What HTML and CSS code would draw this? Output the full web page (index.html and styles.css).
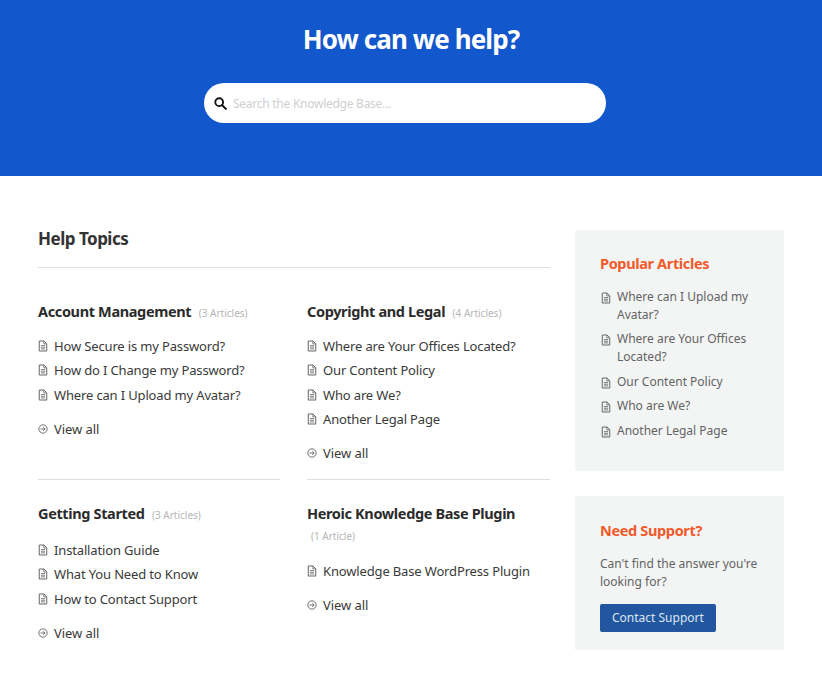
FILE: index.html
```html
<!DOCTYPE html>
<html lang="en">
<head>
  <meta charset="UTF-8">
  <meta name="viewport" content="width=device-width, initial-scale=1.0">
  <title>How can we help?</title>
  <link rel="stylesheet" href="styles.css">
</head>
<body>
  <svg class="sprite" width="0" height="0" aria-hidden="true">
    <symbol id="doc" viewBox="0 0 12 14">
      <path d="M2 1h5.2L10.5 4.3V13H1.5V1z" fill="none" stroke="currentColor" stroke-width="1.2"/>
      <path d="M3.5 6.5h5M3.5 8.5h5M3.5 10.5h5" stroke="currentColor" stroke-width="1"/>
      <path d="M7 1.2v3.3h3.3" fill="none" stroke="currentColor" stroke-width="1"/>
    </symbol>
    <symbol id="arrow" viewBox="0 0 12 12">
      <circle cx="6" cy="6" r="5" fill="none" stroke="currentColor" stroke-width="1"/>
      <path d="M3 6h5.5M6.3 3.8L8.5 6 6.3 8.2" fill="none" stroke="currentColor" stroke-width="1"/>
    </symbol>
  </svg>

  <header class="hero">
    <h1>How can we help?</h1>
    <div class="search">
      <svg class="search-icon" viewBox="0 0 14 14" aria-hidden="true">
        <circle cx="5.6" cy="5.6" r="4.2" fill="none" stroke="currentColor" stroke-width="2"/>
        <path d="M8.8 8.8l4 4" stroke="currentColor" stroke-width="2.2" stroke-linecap="round"/>
      </svg>
      <span class="search-text">Search the Knowledge Base...</span>
    </div>
  </header>

  <div class="page">
    <main class="topics">
      <h2 class="topics-title">Help Topics</h2>
      <div class="topic-grid">
        <section class="topic">
          <h3><span class="topic-name">Account Management</span> <span class="count">(3 Articles)</span></h3>
          <ul class="articles">
            <li><svg class="doc"><use href="#doc"/></svg>How Secure is my Password?</li>
            <li><svg class="doc"><use href="#doc"/></svg>How do I Change my Password?</li>
            <li><svg class="doc"><use href="#doc"/></svg>Where can I Upload my Avatar?</li>
          </ul>
          <a class="view-all"><svg class="arrow"><use href="#arrow"/></svg>View all</a>
        </section>
        <section class="topic">
          <h3><span class="topic-name">Copyright and Legal</span> <span class="count">(4 Articles)</span></h3>
          <ul class="articles">
            <li><svg class="doc"><use href="#doc"/></svg>Where are Your Offices Located?</li>
            <li><svg class="doc"><use href="#doc"/></svg>Our Content Policy</li>
            <li><svg class="doc"><use href="#doc"/></svg>Who are We?</li>
            <li><svg class="doc"><use href="#doc"/></svg>Another Legal Page</li>
          </ul>
          <a class="view-all"><svg class="arrow"><use href="#arrow"/></svg>View all</a>
        </section>
        <section class="topic last">
          <h3><span class="topic-name">Getting Started</span> <span class="count">(3 Articles)</span></h3>
          <ul class="articles">
            <li><svg class="doc"><use href="#doc"/></svg>Installation Guide</li>
            <li><svg class="doc"><use href="#doc"/></svg>What You Need to Know</li>
            <li><svg class="doc"><use href="#doc"/></svg>How to Contact Support</li>
          </ul>
          <a class="view-all"><svg class="arrow"><use href="#arrow"/></svg>View all</a>
        </section>
        <section class="topic last">
          <h3><span class="topic-name">Heroic Knowledge Base Plugin</span> <span class="count count-wrap">(1 Article)</span></h3>
          <ul class="articles">
            <li><svg class="doc"><use href="#doc"/></svg>Knowledge Base WordPress Plugin</li>
          </ul>
          <a class="view-all"><svg class="arrow"><use href="#arrow"/></svg>View all</a>
        </section>
      </div>
    </main>

    <aside class="sidebar">
      <div class="card card-popular">
        <h4>Popular Articles</h4>
        <ul class="popular">
          <li><svg class="doc"><use href="#doc"/></svg><span>Where can I Upload my Avatar?</span></li>
          <li><svg class="doc"><use href="#doc"/></svg><span>Where are Your Offices Located?</span></li>
          <li><svg class="doc"><use href="#doc"/></svg><span>Our Content Policy</span></li>
          <li><svg class="doc"><use href="#doc"/></svg><span>Who are We?</span></li>
          <li><svg class="doc"><use href="#doc"/></svg><span>Another Legal Page</span></li>
        </ul>
      </div>
      <div class="card card-support">
        <h4>Need Support?</h4>
        <p>Can't find the answer you're looking for?</p>
        <a class="btn">Contact Support</a>
      </div>
    </aside>
  </div>
</body>
</html>
```

FILE: styles.css
```css
/* General */
body {
  margin: 0;
  font-family: "Noto Sans", "Open Sans", sans-serif;
  color: #2f2f2f;
  background: #fff;
}
.sprite {
  position: absolute;
}
h1, h2, h3, h4, p, ul {
  margin: 0;
  padding: 0;
}
ul {
  list-style: none;
}

/* Header */
.hero {
  height: 176px;
  box-sizing: border-box;
  padding-top: 21px;
  background: #1257cc;
  text-align: center;
}
.hero h1 {
  color: #fff;
  font-size: 26px;
  font-weight: 700;
  line-height: 36px;
  letter-spacing: -0.9px;
}
.search {
  display: flex;
  align-items: center;
  width: 402px;
  height: 40px;
  margin: 26px 0 0 204px;
  padding-left: 10px;
  box-sizing: border-box;
  background: #fff;
  border-radius: 20px;
}
.search-icon {
  width: 13px;
  height: 13px;
  margin-right: 6px;
  color: #111;
}
.search-text {
  color: #cfcfcf;
  font-size: 12px;
  letter-spacing: -0.26px;
}

/* Layout */
.page {
  display: flex;
  gap: 25px;
  padding: 54px 38px 26px;
}
.topics {
  width: 512px;
}
.sidebar {
  width: 209px;
}

/* Topics */
.topics-title {
  height: 37px;
  border-bottom: 1px solid #dedede;
  font-size: 17px;
  font-weight: 700;
  line-height: 18px;
  letter-spacing: -0.5px;
  color: #333;
}
.topic-grid {
  display: grid;
  grid-template-columns: 242px 243px;
  column-gap: 27px;
}
.topic {
  padding: 33px 0 14px;
  border-bottom: 1px solid #dedede;
}
.topic.last {
  padding-top: 23px;
  padding-bottom: 0;
  border-bottom: none;
}
.topic h3 {
  font-size: 14.5px;
  font-weight: 700;
  line-height: 21px;
  letter-spacing: -0.36px;
  color: #2b2b2b;
}
.count {
  margin-left: 4px;
  font-size: 10px;
  font-weight: 400;
  letter-spacing: 0;
  color: #b5b5b5;
}
.count-wrap {
  display: block;
  margin-top: 2px;
}
.articles {
  margin-top: 10px;
}
.last .articles {
  margin-top: 12px;
}
.articles li {
  display: flex;
  align-items: center;
  height: 24.25px;
  font-size: 13px;
  letter-spacing: -0.15px;
  color: #3a3a3a;
}
.doc {
  flex: none;
  width: 10px;
  height: 12px;
  margin-right: 6px;
  color: #666;
}
.view-all {
  display: flex;
  align-items: center;
  margin-top: 10px;
  height: 24px;
  font-size: 13px;
  letter-spacing: -0.05px;
  color: #3a3a3a;
}
.arrow {
  width: 10px;
  height: 10px;
  margin-right: 6px;
  color: #555;
}

/* Sidebar */
.card {
  padding: 25px;
  background: #f3f5f5;
  border-radius: 3px;
  box-sizing: border-box;
}
.card-popular {
  height: 241px;
  padding-top: 24px;
}
.card-support {
  height: 154px;
  margin-top: 25px;
  border-radius: 3px 3px 0 0;
}
.card h4 {
  color: #f15a29;
  font-size: 14.5px;
  font-weight: 700;
  line-height: 18px;
  letter-spacing: -0.35px;
}
.popular {
  margin-top: 16px;
}
.popular li {
  display: flex;
  align-items: flex-start;
  margin-bottom: 6.4px;
  font-size: 12px;
  line-height: 18px;
  color: #636363;
}
.popular .doc {
  margin-top: 4px;
  margin-left: 1px;
  margin-right: 6px;
}
.card-support p {
  margin-top: 16px;
  font-size: 12px;
  line-height: 18px;
  color: #636363;
}
.btn {
  display: inline-block;
  margin-top: 13px;
  padding: 0 12px;
  height: 28px;
  line-height: 28px;
  font-size: 12px;
  color: #dbe5f3;
  background: #22579f;
  border-radius: 2px;
}
```
